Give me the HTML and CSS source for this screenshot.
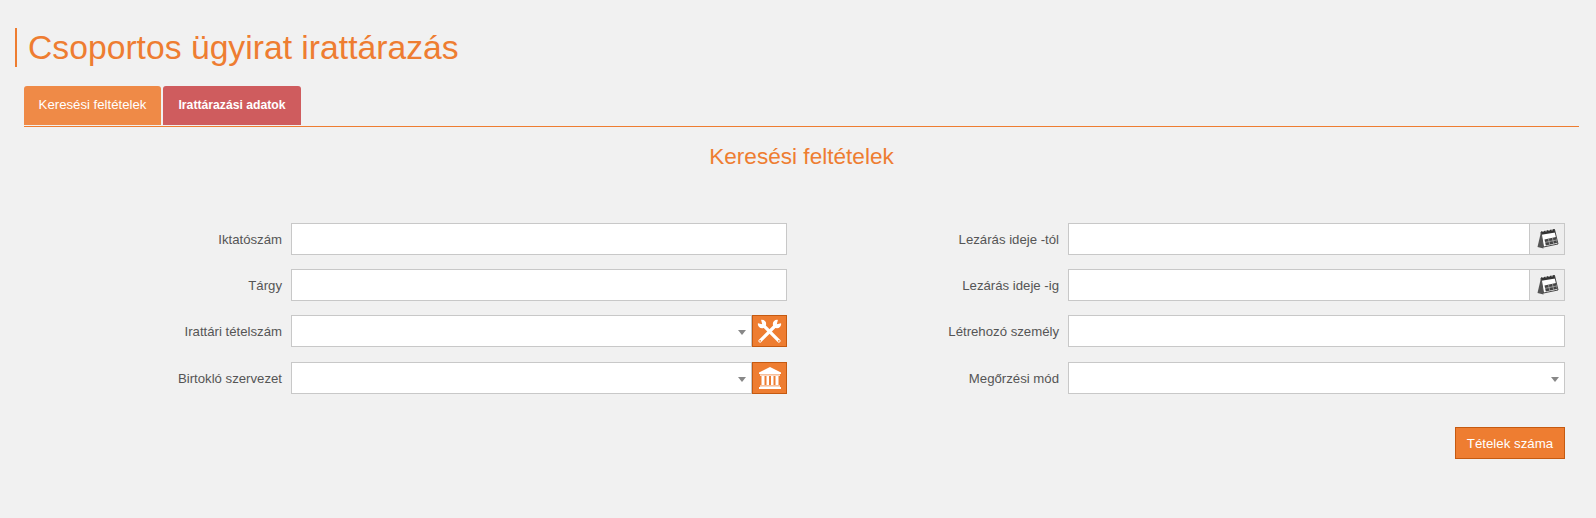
FILE: index.html
```html
<!DOCTYPE html>
<html lang="hu">
<head>
  <meta charset="UTF-8">
  <title>Csoportos ügyirat irattárazás</title>
  <link rel="stylesheet" href="styles.css">
</head>
<body>
  <h1 class="page-title">Csoportos ügyirat irattárazás</h1>

  <div class="tabs">
    <a class="tab tab-active">Keresési feltételek</a>
    <a class="tab tab-red">Irattárazási adatok</a>
  </div>

  <h2 class="section-title">Keresési feltételek</h2>

  <div class="form">
    <div class="col">
      <div class="row">
        <label>Iktatószám</label>
        <div class="field"><input type="text"></div>
      </div>
      <div class="row">
        <label>Tárgy</label>
        <div class="field"><input type="text"></div>
      </div>
      <div class="row row-wide">
        <label>Irattári tételszám</label>
        <div class="field">
          <div class="select"><span class="caret"></span></div>
          <button class="icon-btn" type="button">
            <svg width="25" height="25" viewBox="0 0 24 24">
              <path d="M3 21 L18.5 5.5" stroke="#fff" stroke-width="3.2" stroke-linecap="round"/>
              <path d="M21 21 L5.5 5.5" stroke="#fff" stroke-width="3.2" stroke-linecap="round"/>
              <circle cx="19.2" cy="4.8" r="4" fill="#fff"/>
              <circle cx="4.8" cy="4.8" r="4" fill="#fff"/>
              <path d="M19 5 L20.5 -1 L25 3.5 Z" fill="#ee7d31"/>
              <path d="M5 5 L3.5 -1 L-1 3.5 Z" fill="#ee7d31"/>
              <circle cx="3" cy="21" r=".8" fill="#ee7d31"/>
              <circle cx="21" cy="21" r=".8" fill="#ee7d31"/>
            </svg>
          </button>
        </div>
      </div>
      <div class="row">
        <label>Birtokló szervezet</label>
        <div class="field">
          <div class="select"><span class="caret"></span></div>
          <button class="icon-btn" type="button">
            <svg width="24" height="24" viewBox="0 0 24 24" fill="#fff">
              <path d="M12 1 L23 6.5 V8 H1 V6.5 Z"/>
              <rect x="2" y="8.5" width="20" height="1.2"/>
              <rect x="3.5" y="10" width="3" height="9"/>
              <rect x="8.5" y="10" width="2.5" height="9"/>
              <rect x="13" y="10" width="2.5" height="9"/>
              <rect x="17.5" y="10" width="3" height="9"/>
              <rect x="2" y="19.5" width="20" height="1.2"/>
              <rect x="1" y="21" width="22" height="2"/>
            </svg>
          </button>
        </div>
      </div>
    </div>

    <div class="col">
      <div class="row">
        <label>Lezárás ideje -tól</label>
        <div class="field field-right">
          <input type="text">
          <span class="cal-btn">
            <svg width="23" height="22" viewBox="0 0 23 22">
              <path d="M5 4 L18.5 1.5 L22 16 L7.5 19 Z" fill="#fff" stroke="#333" stroke-width=".9"/>
              <path d="M5 3.8 L18.5 1.2 L19.2 4.4 L5.4 6.8 Z" fill="#333"/>
              <path d="M7 4 V2 M10 3.5 V1.5 M13 3 V1 M16 2.5 V.5" stroke="#fff" stroke-width=".9"/>
              <path d="M5 4 L1.5 19 L7.5 20.5 L7.5 19 Z" fill="#555"/>
              <path d="M8.5 11.5 L20 9 L21 15 L9.8 17.4 Z" fill="#444"/>
              <path d="M12.5 10.8 L13.7 16.8 M16.5 10 L17.6 15.8 M9 14.4 L20.5 12" stroke="#bbb" stroke-width=".7"/>
            </svg>
          </span>
        </div>
      </div>
      <div class="row">
        <label>Lezárás ideje -ig</label>
        <div class="field field-right">
          <input type="text">
          <span class="cal-btn">
            <svg width="23" height="22" viewBox="0 0 23 22">
              <path d="M5 4 L18.5 1.5 L22 16 L7.5 19 Z" fill="#fff" stroke="#333" stroke-width=".9"/>
              <path d="M5 3.8 L18.5 1.2 L19.2 4.4 L5.4 6.8 Z" fill="#333"/>
              <path d="M7 4 V2 M10 3.5 V1.5 M13 3 V1 M16 2.5 V.5" stroke="#fff" stroke-width=".9"/>
              <path d="M5 4 L1.5 19 L7.5 20.5 L7.5 19 Z" fill="#555"/>
              <path d="M8.5 11.5 L20 9 L21 15 L9.8 17.4 Z" fill="#444"/>
              <path d="M12.5 10.8 L13.7 16.8 M16.5 10 L17.6 15.8 M9 14.4 L20.5 12" stroke="#bbb" stroke-width=".7"/>
            </svg>
          </span>
        </div>
      </div>
      <div class="row row-wide">
        <label>Létrehozó személy</label>
        <div class="field field-right"><input type="text"></div>
      </div>
      <div class="row">
        <label>Megőrzési mód</label>
        <div class="field field-right">
          <div class="select"><span class="caret"></span></div>
        </div>
      </div>
      <div class="actions">
        <button class="btn" type="button">Tételek száma</button>
      </div>
    </div>
  </div>
</body>
</html>
```

FILE: styles.css
```css
:root {
  --orange: #ee7d31;
  --border: #c8c8c8;
  --bg: #f1f1f1;
}

body {
  margin: 0;
  padding: 28px 17px 0 15px;
  background: var(--bg);
  color: #555;
  font-family: "Liberation Sans", Arial, sans-serif;
  font-size: 13.2px;
}

.page-title {
  margin: 0 0 19px;
  padding-left: 11px;
  border-left: 2px solid var(--orange);
  color: var(--orange);
  font-size: 33.7px;
  font-weight: normal;
  line-height: 39px;
}

.tabs {
  display: flex;
  gap: 2px;
  margin-left: 9px;
  border-bottom: 1px solid var(--orange);
  padding-bottom: 1px;
}

.tab {
  width: 137px;
  height: 39px;
  border-radius: 3px 3px 0 0;
  color: #fff;
  line-height: 38px;
  text-align: center;
}

.tab-active {
  background: #ef8a47;
}

.tab-red {
  width: 138px;
  background: #cf5c5e;
  font-size: 12.2px;
  font-weight: bold;
}

.section-title {
  margin: 17px 0 53px 9px;
  color: var(--orange);
  font-size: 22.6px;
  font-weight: normal;
  line-height: 26px;
  text-align: center;
}

.form {
  display: flex;
  gap: 6px;
}

.col {
  width: 772px;
}

.row {
  display: flex;
  align-items: center;
  height: 32px;
  margin-bottom: 14px;
}

.row-wide {
  margin-bottom: 15px;
}

.row label {
  flex: 1;
  padding-right: 9px;
  text-align: right;
}

.field {
  display: flex;
  width: 496px;
  height: 32px;
}

.field-right {
  width: 497px;
}

.field input, .select {
  flex: 1;
  min-width: 0;
  box-sizing: border-box;
  height: 32px;
  margin: 0;
  padding: 0 6px;
  background: #fff;
  border: 1px solid var(--border);
  border-radius: 0;
}

.select {
  position: relative;
}

.caret {
  position: absolute;
  right: 5px;
  top: 14px;
  border: 4px solid transparent;
  border-top: 5px solid #888;
  border-bottom: 0;
}

.icon-btn {
  display: flex;
  align-items: center;
  justify-content: center;
  width: 35px;
  height: 32px;
  padding: 0;
  background: var(--orange);
  border: 1px solid #c55a11;
}

.cal-btn {
  display: flex;
  align-items: center;
  justify-content: center;
  box-sizing: border-box;
  width: 35px;
  height: 32px;
  background: #eee;
  border: 1px solid var(--border);
  border-left: 0;
}

.actions {
  display: flex;
  justify-content: flex-end;
  margin-top: 33px;
}

.btn {
  width: 110px;
  height: 32px;
  padding: 0;
  background: var(--orange);
  border: 1px solid #c55a11;
  color: #fff;
  font-family: inherit;
  font-size: 13.3px;
}
```
